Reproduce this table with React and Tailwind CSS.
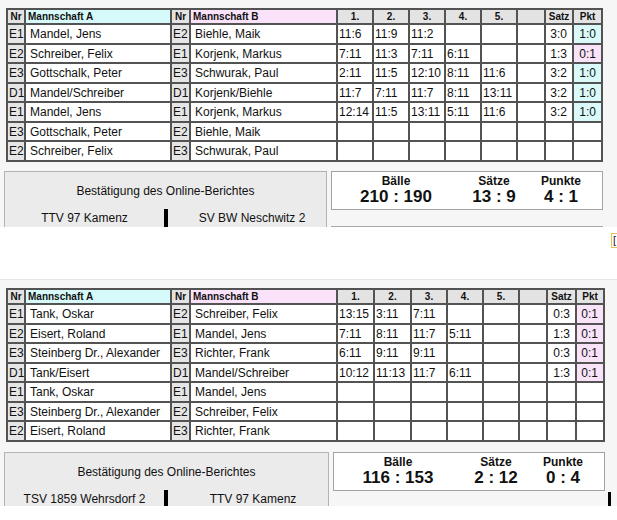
import React from 'react';

const GAME1 = [
  ['E1', 'Mandel, Jens', 'E2', 'Biehle, Maik', ['11:6', '11:9', '11:2', '', ''], '3:0', '1:0'],
  ['E2', 'Schreiber, Felix', 'E1', 'Korjenk, Markus', ['7:11', '11:3', '7:11', '6:11', ''], '1:3', '0:1'],
  ['E3', 'Gottschalk, Peter', 'E3', 'Schwurak, Paul', ['2:11', '11:5', '12:10', '8:11', '11:6'], '3:2', '1:0'],
  ['D1', 'Mandel/Schreiber', 'D1', 'Korjenk/Biehle', ['11:7', '7:11', '11:7', '8:11', '13:11'], '3:2', '1:0'],
  ['E1', 'Mandel, Jens', 'E1', 'Korjenk, Markus', ['12:14', '11:5', '13:11', '5:11', '11:6'], '3:2', '1:0'],
  ['E3', 'Gottschalk, Peter', 'E2', 'Biehle, Maik', ['', '', '', '', ''], '', ''],
  ['E2', 'Schreiber, Felix', 'E3', 'Schwurak, Paul', ['', '', '', '', ''], '', ''],
];

const GAME2 = [
  ['E1', 'Tank, Oskar', 'E2', 'Schreiber, Felix', ['13:15', '3:11', '7:11', '', ''], '0:3', '0:1'],
  ['E2', 'Eisert, Roland', 'E1', 'Mandel, Jens', ['7:11', '8:11', '11:7', '5:11', ''], '1:3', '0:1'],
  ['E3', 'Steinberg Dr., Alexander', 'E3', 'Richter, Frank', ['6:11', '9:11', '9:11', '', ''], '0:3', '0:1'],
  ['D1', 'Tank/Eisert', 'D1', 'Mandel/Schreiber', ['10:12', '11:13', '11:7', '6:11', ''], '1:3', '0:1'],
  ['E1', 'Tank, Oskar', 'E1', 'Mandel, Jens', ['', '', '', '', ''], '', ''],
  ['E3', 'Steinberg Dr., Alexander', 'E2', 'Schreiber, Felix', ['', '', '', '', ''], '', ''],
  ['E2', 'Eisert, Roland', 'E3', 'Richter, Frank', ['', '', '', '', ''], '', ''],
];

const head = 'bg-[#e3e3e3] text-[10px] font-bold flex items-center justify-center leading-none';
const txt = 'text-[12px] flex items-center leading-none whitespace-nowrap overflow-hidden';
const cell = `bg-white ${txt}`;

function pktBg(v) {
  if (v === '1:0') return 'bg-[#dafafa]';
  if (v === '0:1') return 'bg-[#f9e3f9]';
  return 'bg-white';
}

function ScoreTable({ rows, cols }) {
  return (
    <div className={`grid ${cols} grid-rows-[13px_18px_17px_18px_17px_18px_17px_18px] gap-[2px] p-[2px] bg-[#535353] w-fit text-[#111]`}>
      <div className={head}>Nr</div>
      <div className="bg-[#d6fafa] text-[10px] font-bold flex items-center pl-[2px] leading-none">Mannschaft A</div>
      <div className={head}>Nr</div>
      <div className="bg-[#fae2fa] text-[10px] font-bold flex items-center pl-[2px] leading-none">Mannschaft B</div>
      {['1.', '2.', '3.', '4.', '5.', '', 'Satz', 'Pkt'].map((h, i) => (
        <div key={i} className={head}>{h}</div>
      ))}
      {rows.map((r, i) => (
        <React.Fragment key={i}>
          <div className="bg-[#e5e5e5] text-[12px] flex items-center pl-[1px] leading-none">{r[0]}</div>
          <div className={`${cell} pl-[4px]`}>{r[1]}</div>
          <div className="bg-[#e5e5e5] text-[12px] flex items-center pl-[1px] leading-none">{r[2]}</div>
          <div className={`${cell} pl-[4px]`}>{r[3]}</div>
          {r[4].map((s, j) => (
            <div key={j} className={`${cell} pl-[1px]`}>{s}</div>
          ))}
          <div className={cell}></div>
          <div className={`${cell} justify-end pr-[5px]`}>{r[5]}</div>
          <div className={`${txt} ${pktBg(r[6])} justify-end pr-[5px]`}>{r[6]}</div>
        </React.Fragment>
      ))}
    </div>
  );
}

function Summary({ home, guest, balls, sets, points, leftW, rightW }) {
  return (
    <div className="flex items-start gap-[4px]">
      <div className={`${leftW} h-[60px] bg-[#ebebeb] border border-[#b3b3b3] border-b-0 text-[12px] text-[#111]`}>
        <div className="text-center mt-[12px] leading-[14px]">Bestätigung des Online-Berichtes</div>
        <div className="flex items-start mt-[11px]">
          <div className="w-[159px] text-center leading-[14px] mt-[2px]">{home}</div>
          <div className="w-[4px] h-[22px] bg-black"></div>
          <div className="flex-1 text-center leading-[14px] mt-[2px] pl-[10px]">{guest}</div>
        </div>
      </div>
      <div className={`${rightW} flex flex-col`}>
        <div className="h-[39px] bg-white border border-[#a3a3a3] grid grid-cols-[128px_68px_66px] text-[#111] pt-[3px]">
          {[['Bälle', balls], ['Sätze', sets], ['Punkte', points]].map(([l, v]) => (
            <div key={l} className="flex flex-col items-center">
              <div className="text-[12px] font-bold leading-[13px]">{l}</div>
              <div className="text-[17px] font-bold leading-[18px]">{v}</div>
            </div>
          ))}
        </div>
      </div>
    </div>
  );
}

export default function App() {
  return (
    <div className="w-[617px] h-[520px] bg-white relative overflow-hidden" style={{ fontFamily: '"Liberation Sans", Arial, sans-serif' }}>
      {/* first match */}
      <div className="h-[227px] bg-[#f6f6f6] pt-[8px] pl-[6px] relative overflow-hidden">
        <ScoreTable rows={GAME1} cols="grid-cols-[16px_144px_17px_145px_34px_34px_34px_34px_34px_26px_26px_27px]" />
        <div className="mt-[9px] -ml-[2px]">
          <Summary home="TTV 97 Kamenz" guest="SV BW Neschwitz 2" balls="210 : 190" sets="13 : 9" points="4 : 1" leftW="w-[323px]" rightW="w-[272px]" />
        </div>
        <div className="absolute left-[331px] top-[226px] w-[272px] h-[1px] bg-[#a8a8a8]"></div>
      </div>
      <div className="absolute left-[611px] top-[233px] w-[10px] h-[15px] border border-[#e2c25a] bg-white text-[11px] leading-[13px] pl-[1px] text-[#222]">[</div>

      {/* second match */}
      <div className="mt-[52px] h-[227px] bg-[#f6f6f6] border-t border-[#e6e6e6] pt-[8px] pl-[6px] relative overflow-hidden">
        <ScoreTable rows={GAME2} cols="grid-cols-[16px_144px_17px_145px_35px_35px_34px_34px_34px_26px_27px_26px]" />
        <div className="mt-[10px] -ml-[2px]">
          <Summary home="TSV 1859 Wehrsdorf 2" guest="TTV 97 Kamenz" balls="116 : 153" sets="2 : 12" points="0 : 4" leftW="w-[325px]" rightW="w-[272px]" />
        </div>
        <div className="absolute left-[608px] top-[212px] w-[3px] h-[14px] bg-black"></div>
      </div>
    </div>
  );
}
